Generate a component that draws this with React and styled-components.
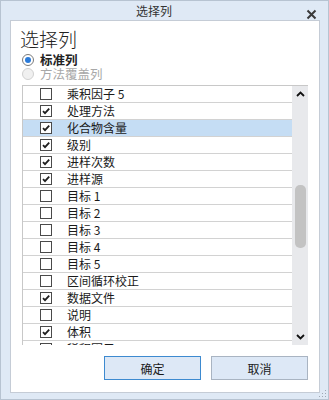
import React from "react";
import styled, { createGlobalStyle } from "styled-components";

const GlobalStyle = createGlobalStyle`
  html, body {
    margin: 0;
    padding: 0;
    background: #ffffff;
  }
  body {
    font-family: "Noto Sans CJK SC", "Noto Sans", sans-serif;
  }
`;

const columns = [
    { name: "乘积因子 5", checked: false },
    { name: "处理方法", checked: true },
    { name: "化合物含量", checked: true, selected: true },
    { name: "级别", checked: true },
    { name: "进样次数", checked: true },
    { name: "进样源", checked: true },
    { name: "目标 1", checked: false },
    { name: "目标 2", checked: false },
    { name: "目标 3", checked: false },
    { name: "目标 4", checked: false },
    { name: "目标 5", checked: false },
    { name: "区间循环校正", checked: false },
    { name: "数据文件", checked: true },
    { name: "说明", checked: false },
    { name: "体积", checked: true },
    { name: "稀释因子 1", checked: false },
];

function CheckBox({ checked }) {
    return (
        <svg width="12" height="12" viewBox="0 0 12 12">
            <rect x="0.5" y="0.5" width="11" height="11" fill="#fff" stroke="#4a4a4a" />
            {checked && (
                <path d="M3 6.2 L5 8.2 L9.2 3.6" fill="none" stroke="#1e1e1e" strokeWidth="1.8" />
            )}
        </svg>
    );
}

function Radio({ checked, disabled }) {
    return (
        <svg width="12" height="12" viewBox="0 0 12 12">
            <circle cx="6" cy="6" r="5.5" fill={disabled ? "#f0f0f0" : "#fff"} stroke={disabled ? "#d0d0d0" : "#7a7a7a"} />
            {checked && <circle cx="6" cy="6" r="3" fill="#2b7bd9" />}
        </svg>
    );
}

function App() {
    return (
        <Window>
            <GlobalStyle />
            <TitleBar>
                <span className="title">选择列</span>
                <CloseButton>
                    <svg width="11" height="11" viewBox="0 0 11 11">
                        <path d="M1.5 1.5 L9.5 9.5 M9.5 1.5 L1.5 9.5" stroke="#3a3a3a" strokeWidth="2" />
                    </svg>
                </CloseButton>
            </TitleBar>
            <Panel>
                <Heading>选择列</Heading>
                <RadioGroup>
                    <RadioRow>
                        <Radio checked />
                        <RadioLabel $bold>标准列</RadioLabel>
                    </RadioRow>
                    <RadioRow>
                        <Radio disabled />
                        <RadioLabel $disabled>方法覆盖列</RadioLabel>
                    </RadioRow>
                </RadioGroup>
                <ListBox>
                    <Rows>
                        {columns.map((c) => (
                            <Row key={c.name} $selected={c.selected}>
                                <CheckCell>
                                    <CheckBox checked={c.checked} />
                                </CheckCell>
                                <NameCell>{c.name}</NameCell>
                            </Row>
                        ))}
                    </Rows>
                    <ScrollBar>
                        <Arrow>
                            <svg width="9" height="6" viewBox="0 0 9 6">
                                <path d="M1 5 L4.5 1.5 L8 5" fill="none" stroke="#111" strokeWidth="1.8" />
                            </svg>
                        </Arrow>
                        <Track>
                            <Thumb />
                        </Track>
                        <Arrow>
                            <svg width="9" height="6" viewBox="0 0 9 6">
                                <path d="M1 1 L4.5 4.5 L8 1" fill="none" stroke="#111" strokeWidth="1.8" />
                            </svg>
                        </Arrow>
                    </ScrollBar>
                </ListBox>
                <Buttons>
                    <Button $focused>确定</Button>
                    <Button>取消</Button>
                </Buttons>
            </Panel>
            <Grip>
                <svg width="8" height="8" viewBox="0 0 8 8">
                    <rect x="6" y="0" width="1" height="1" fill="#a0a8b4" />
                    <rect x="3" y="3" width="1" height="1" fill="#a0a8b4" />
                    <rect x="6" y="3" width="1" height="1" fill="#a0a8b4" />
                    <rect x="0" y="6" width="1" height="1" fill="#a0a8b4" />
                    <rect x="3" y="6" width="1" height="1" fill="#a0a8b4" />
                    <rect x="6" y="6" width="1" height="1" fill="#a0a8b4" />
                </svg>
            </Grip>
        </Window>
    );
}

const Window = styled.div`
  position: relative;
  box-sizing: border-box;
  width: 329px;
  height: 400px;
  background: #dfe9f5;
  border: 1px solid #b7c3d1;
  display: flex;
  flex-direction: column;
  padding: 0 8px 6px 9px;
`;

const TitleBar = styled.div`
  height: 19px;
  display: flex;
  align-items: center;
  justify-content: center;
  position: relative;

  .title {
    font-size: 12px;
    color: #333;
    margin-left: -22px;
    line-height: 1;
  }
`;

const CloseButton = styled.div`
  position: absolute;
  right: 3px;
  top: 8px;
  display: flex;
`;

const Panel = styled.div`
  flex: 1;
  background: #ffffff;
  border: 1px solid #c5ccd6;
  box-sizing: border-box;
  display: flex;
  flex-direction: column;
  padding: 0 11px 0 11px;
`;

const Heading = styled.div`
  font-size: 19px;
  font-weight: 300;
  color: #222;
  line-height: 26px;
  margin-top: 5px;
  margin-left: -2px;
`;

const RadioGroup = styled.div`
  display: flex;
  flex-direction: column;
  margin-top: 1px;
  margin-bottom: 4px;
`;

const RadioRow = styled.div`
  display: flex;
  align-items: center;
  gap: 6px;
  height: 14px;
`;

const RadioLabel = styled.span`
  font-size: 12.5px;
  font-weight: ${(p) => (p.$bold ? 700 : 400)};
  color: ${(p) => (p.$disabled ? "#a8a8a8" : "#222")};
  line-height: 14px;
`;

const ListBox = styled.div`
  display: flex;
  height: 259px;
  overflow: hidden;
  border-left: 1px solid #c8c8c8;
  border-top: 1px solid #c8c8c8;
`;

const Rows = styled.div`
  flex: 1;
  overflow: hidden;
`;

const Row = styled.div`
  display: flex;
  align-items: center;
  height: 16px;
  border-bottom: 1px solid #d2d2d2;
  background: ${(p) => (p.$selected ? "#c5ddf4" : "#fff")};
`;

const CheckCell = styled.div`
  width: 42px;
  display: flex;
  justify-content: center;
  padding-left: 2px;
`;

const NameCell = styled.div`
  font-size: 12px;
  color: #1a1a1a;
  line-height: 16px;
`;

const ScrollBar = styled.div`
  width: 16px;
  background: #e8e9ec;
  display: flex;
  flex-direction: column;
`;

const Arrow = styled.div`
  height: 16px;
  display: flex;
  align-items: center;
  justify-content: center;
`;

const Track = styled.div`
  flex: 1;
  display: flex;
  flex-direction: column;
  padding-top: 83px;
  align-items: center;
`;

const Thumb = styled.div`
  width: 11px;
  height: 63px;
  background: #c3c3c3;
  border-radius: 5px;
`;

const Buttons = styled.div`
  display: flex;
  justify-content: flex-end;
  gap: 10px;
  margin-top: 11px;
`;

const Button = styled.div`
  box-sizing: border-box;
  width: 97px;
  height: 24px;
  display: flex;
  align-items: center;
  justify-content: center;
  font-size: 12px;
  color: #1a1a1a;
  background: #dde8f6;
  border: 1px solid ${(p) => (p.$focused ? "#3d8ad0" : "#a9b4c2")};
`;

const Grip = styled.div`
  position: absolute;
  right: 1px;
  bottom: 1px;
  display: flex;
`;

export default App;
